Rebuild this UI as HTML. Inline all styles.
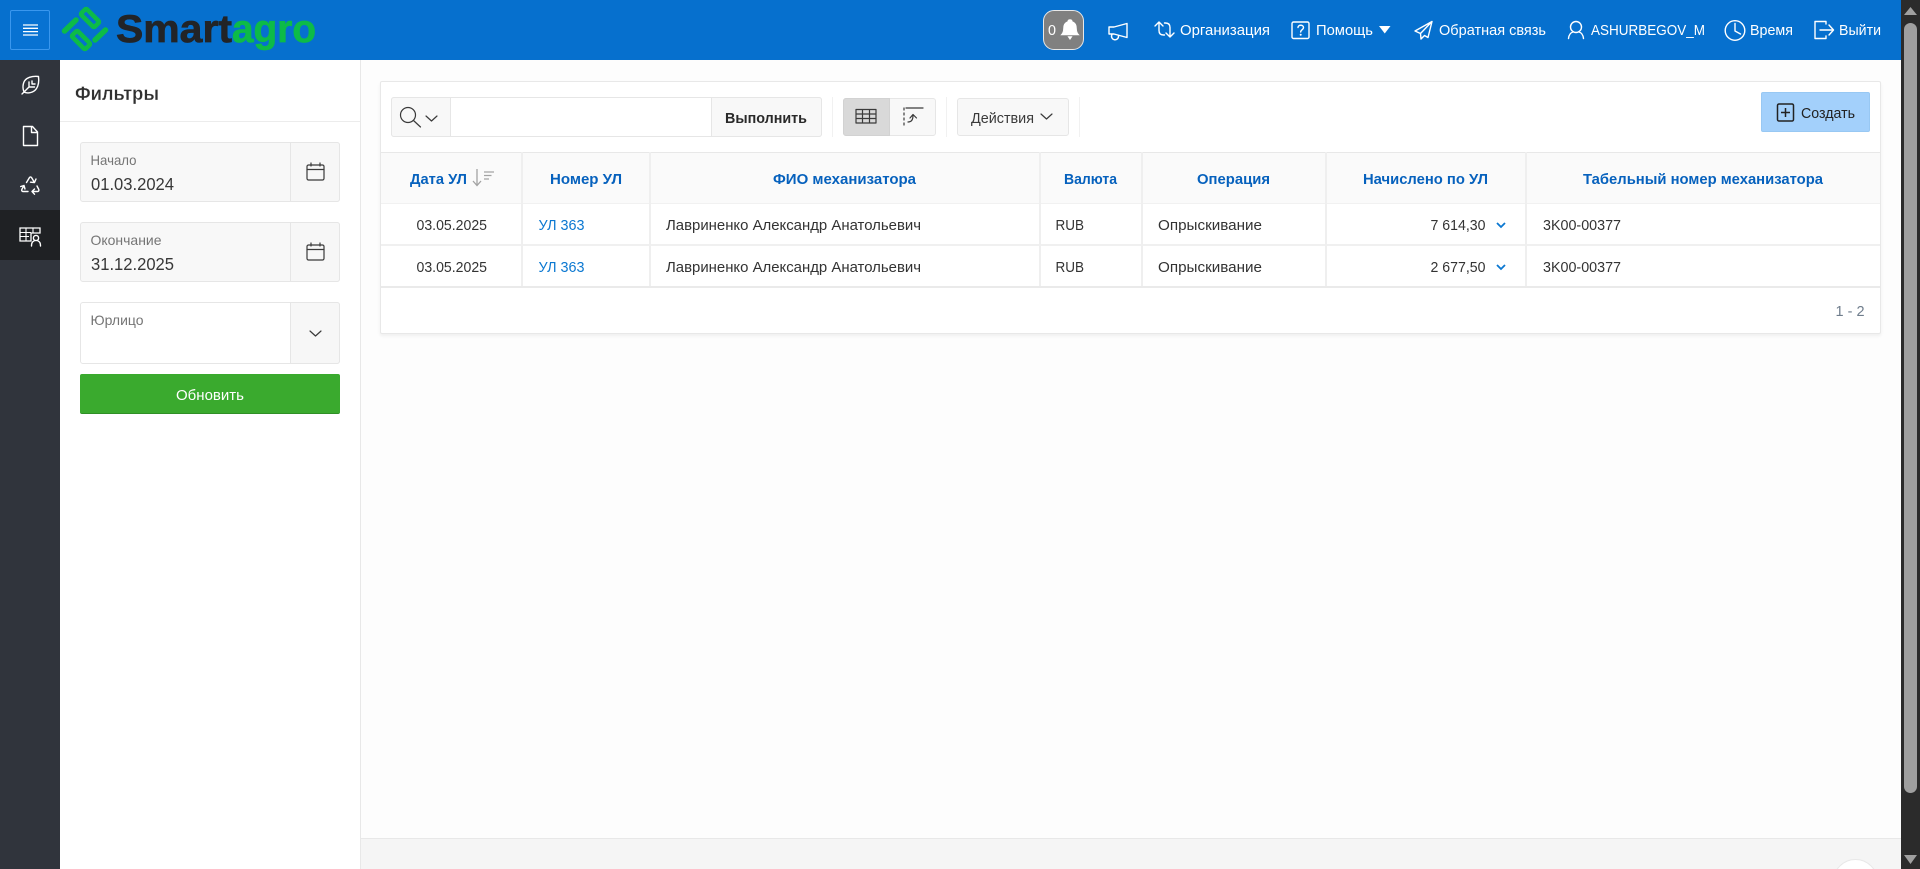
<!DOCTYPE html>
<html lang="ru">
<head>
<meta charset="utf-8">
<title>Smartagro</title>
<style>
html,body{margin:0;padding:0;width:1920px;height:869px;overflow:hidden;background:#fdfdfd;font-family:"Liberation Sans",sans-serif}
#p{position:relative;width:1920px;height:869px;overflow:hidden;background:#fdfdfd}
.a{position:absolute;box-sizing:border-box}
svg{position:absolute;left:0;top:0}
text{font-family:"Liberation Sans",sans-serif;font-size:14.5px;fill:#333}
.w text,text.w{fill:#fff}
.th text{fill:#0661bd;font-weight:bold;font-size:14.5px}
.l{fill:#0b78d1}
.lab{fill:#757575;font-size:14px}
.val{fill:#383838;font-size:17.5px}
.ic{fill:none;stroke:#fff;stroke-width:1.4;stroke-linecap:round;stroke-linejoin:round}
.dk{fill:none;stroke:#3a3a3a;stroke-width:1.2;stroke-linecap:round;stroke-linejoin:round}
</style>
</head>
<body>
<div id="p">
<!-- header -->
<div class="a" style="left:0;top:0;width:1901px;height:60px;background:#0670ce"></div>
<div class="a" style="left:10px;top:10px;width:40px;height:40px;border:1px solid #3a97ee;border-radius:2px;background:#0872d2"></div>
<div class="a" style="left:1043px;top:10px;width:41px;height:40px;background:#808080;border:1px solid #e8e8e8;border-radius:11px"></div>
<!-- sidebar -->
<div class="a" style="left:0;top:60px;width:60px;height:809px;background:#30343c"></div>
<div class="a" style="left:0;top:210px;width:60px;height:50px;background:#1f2124"></div>
<!-- filter panel -->
<div class="a" style="left:60px;top:60px;width:301px;height:809px;background:#fff;border-right:1px solid #e8e8e8"></div>
<div class="a" style="left:60px;top:121px;width:300px;height:1px;background:#ececec"></div>
<div class="a" style="left:80px;top:142px;width:260px;height:60px;background:#f8f8f8;border:1px solid #e6e6e6;border-radius:3px"></div>
<div class="a" style="left:290px;top:142px;width:50px;height:60px;background:#f7f7f7;border:1px solid #e6e6e6;border-radius:0 3px 3px 0"></div>
<div class="a" style="left:80px;top:222px;width:260px;height:60px;background:#f8f8f8;border:1px solid #e6e6e6;border-radius:3px"></div>
<div class="a" style="left:290px;top:222px;width:50px;height:60px;background:#f7f7f7;border:1px solid #e6e6e6;border-radius:0 3px 3px 0"></div>
<div class="a" style="left:80px;top:302px;width:260px;height:62px;background:#fff;border:1px solid #e6e6e6;border-radius:3px"></div>
<div class="a" style="left:290px;top:302px;width:50px;height:62px;background:#f7f7f7;border:1px solid #e6e6e6;border-radius:0 3px 3px 0"></div>
<div class="a" style="left:80px;top:374px;width:260px;height:40px;background:#3aaa2e;border-radius:2px;border-bottom:1px solid #2f8f26"></div>
<!-- footer -->
<div class="a" style="left:361px;top:838px;width:1540px;height:31px;background:#f5f5f5;border-top:1px solid #e8e8e8"></div>
<div class="a" style="left:1833px;top:859px;width:45px;height:45px;background:#fff;border:1px solid #e8e8e8;border-radius:50%"></div>
<!-- report card -->
<div class="a" style="left:380px;top:81px;width:1501px;height:253px;background:#fff;border:1px solid #e8e8e8;border-radius:2px;box-shadow:0 2px 3px rgba(0,0,0,.06)"></div>
<!-- toolbar -->
<div class="a" style="left:391px;top:97px;width:431px;height:40px;background:#fff;border:1px solid #e6e6e6;border-radius:3px"></div>
<div class="a" style="left:391px;top:97px;width:60px;height:40px;background:#f8f8f8;border:1px solid #e6e6e6;border-radius:3px 0 0 3px"></div>
<div class="a" style="left:711px;top:97px;width:111px;height:40px;background:#f8f8f8;border:1px solid #e6e6e6;border-radius:0 3px 3px 0"></div>
<div class="a" style="left:832px;top:97px;width:1px;height:40px;background:#f1f1f1"></div>
<div class="a" style="left:843px;top:98px;width:93px;height:38px;background:#f8f8f8;border:1px solid #e6e6e6;border-radius:3px"></div>
<div class="a" style="left:843px;top:98px;width:47px;height:38px;background:#d9d9d9;border:1px solid #d2d2d2;border-radius:3px 0 0 3px"></div>
<div class="a" style="left:946px;top:97px;width:1px;height:40px;background:#f1f1f1"></div>
<div class="a" style="left:957px;top:98px;width:112px;height:38px;background:#f8f8f8;border:1px solid #e6e6e6;border-radius:3px"></div>
<div class="a" style="left:1079px;top:97px;width:1px;height:40px;background:#f1f1f1"></div>
<div class="a" style="left:1761px;top:92px;width:109px;height:40px;background:#a3d0fb;border:1px solid #98c8f3;border-radius:2px"></div>
<!-- table -->
<div class="a" style="left:381px;top:152px;width:1499px;height:52px;background:#fafafa;border-top:1px solid #e8e8e8;border-bottom:1px solid #f1f1f1"></div>
<div class="a" style="left:381px;top:244px;width:1499px;height:2px;background:#f0f0f0"></div>
<div class="a" style="left:381px;top:286px;width:1499px;height:2px;background:#eaeaea"></div>
<div class="a" style="left:521px;top:152px;width:2px;height:134px;background:#efefef"></div>
<div class="a" style="left:649px;top:152px;width:2px;height:134px;background:#efefef"></div>
<div class="a" style="left:1039px;top:152px;width:2px;height:134px;background:#efefef"></div>
<div class="a" style="left:1141px;top:152px;width:2px;height:134px;background:#efefef"></div>
<div class="a" style="left:1325px;top:152px;width:2px;height:134px;background:#efefef"></div>
<div class="a" style="left:1525px;top:152px;width:2px;height:134px;background:#efefef"></div>
<!-- scrollbar -->
<div class="a" style="left:1901px;top:0;width:19px;height:869px;background:#2b2b2b"></div>
<div class="a" style="left:1904px;top:23px;width:13px;height:770px;background:#9f9f9f;border-radius:7px"></div>

<svg width="1920" height="869" viewBox="0 0 1920 869" xmlns="http://www.w3.org/2000/svg">
<!-- scroll arrows -->
<path d="M1910.500 7l6.500 8h-13z M1904 855h13l-6.500 9z" fill="#a0a0a0"/>
<!-- hamburger -->
<path d="M23 25h15M23 28.300h15M23 31.600h15M23 35h15" stroke="#fff" stroke-width="1.300" fill="none"/>
<!-- logo -->
<g fill="none" stroke="#0dbb48" stroke-width="4.600" stroke-linecap="round" stroke-linejoin="round">
<rect x="80.500" y="14" width="19" height="8" rx="1.500" transform="rotate(45 90 18)"/>
<rect x="71.500" y="36" width="19" height="8" rx="1.500" transform="rotate(45 81 40)"/>
<path stroke-width="5.500" d="M64.500 31L76 20M95 40L105.500 30"/>
</g>
<text x="116" y="42" textLength="116" lengthAdjust="spacingAndGlyphs" style="font-size:39px;font-weight:bold;fill:#222427;stroke:#222427;stroke-width:.7">Smart</text>
<text x="232" y="42" textLength="84" lengthAdjust="spacingAndGlyphs" style="font-size:39px;font-weight:bold;fill:#0dbb48;stroke:#0dbb48;stroke-width:.7">agro</text>

<!-- header items -->
<g class="w">
<text x="1048" y="35" textLength="8" lengthAdjust="spacingAndGlyphs">0</text>
<text x="1180" y="35" textLength="90" lengthAdjust="spacingAndGlyphs">Организация</text>
<text x="1316" y="35" textLength="57" lengthAdjust="spacingAndGlyphs">Помощь</text>
<text x="1439" y="35" textLength="107" lengthAdjust="spacingAndGlyphs">Обратная связь</text>
<text x="1591" y="35" textLength="114" lengthAdjust="spacingAndGlyphs">ASHURBEGOV_M</text>
<text x="1750" y="35" textLength="43" lengthAdjust="spacingAndGlyphs">Время</text>
<text x="1839" y="35" textLength="42" lengthAdjust="spacingAndGlyphs">Выйти</text>
</g>
<!-- bell -->
<path d="M1070 19.500c1.300 0 2.200.9 2.200 2 3.200 1 4.300 3.800 4.300 7 0 3.500 1 5 2.500 6.500h-18c1.500-1.500 2.500-3 2.500-6.500 0-3.200 1.100-6 4.300-7 0-1.100.9-2 2.200-2z M1068 36.500h4l-2 3z" fill="#fff" stroke="#fff" stroke-width=".6"/>
<!-- megaphone -->
<path class="ic" d="M1127 23.500v14l-13-3.500h-5v-7h5zM1112 34.500a3.500 3.500 0 1 0 6.500 1.500"/>
<!-- swap -->
<path class="ic" d="M1155 26l4-4 4 4M1159 22.500v8c0 3 1.500 4.500 4.500 4.500h1M1174 33l-4 4-4-4M1170 36.500v-9c0-3-1.500-4.500-4.500-4.500h-1"/>
<!-- help -->
<rect class="ic" x="1292" y="22" width="17" height="16.500" rx="1.500"/>
<path class="ic" d="M1298 27.500c0-3 5.500-3 5.500 0 0 2.300-2.800 2-2.800 4.500"/>
<circle cx="1300.700" cy="34.700" r="1" fill="#fff"/>
<path d="M1379 26h11.500l-5.750 7.500z" fill="#fff"/>
<!-- send -->
<path class="ic" d="M1432 21.500l-17 9.500 5.500 2.500zM1432 21.500l-11.500 12 .5 5.500 3.500-3.500 3.500 2z"/>
<!-- user -->
<circle class="ic" cx="1576" cy="27" r="5.500"/>
<path class="ic" d="M1568.500 38.500c.5-4 2.500-6 4.500-6.500M1583.500 38.500c-.5-4-2.500-6-4.500-6.500"/>
<!-- clock -->
<circle class="ic" cx="1735" cy="30.500" r="9.800"/>
<path class="ic" d="M1735 23.500v7.500l5.500 3"/>
<!-- exit -->
<path class="ic" d="M1826 24v-2.500h-11v17h11V36M1820 30h13M1829 25l4.500 5-4.500 5"/>

<!-- sidebar icons -->
<path class="ic" d="M22 94l7-7M24 92c-2-5-1-11 3-13.500 3-2 8-2.500 11.500-2 .5 4 0 9-2 12-2.500 4-8.500 5.500-12.500 3.500zM29 87v-5M29 87h5.500M32 84v-3M32 84h3"/>
<path class="ic" d="M23.500 126.500h9l5 5.500v13.500h-14zM31.500 126.500v6h6"/>
<path class="ic" d="M26.500 182.500l3-5c.5-.7 1.500-.7 2 0l3 5M34.500 182.500l1.500-3.500M34.500 182.500l-4-.3M37 186l1.800 3.500c.4.9-.2 2-1.200 2H32M32 191.500l2.500-2.500M32 191.500l2.500 2.700M28 191.500h-5c-1 0-1.600-1.100-1.200-2l2.200-4M24 185.500l-3.300 1M24 185.500l1 3.500"/>
<path d="M20 228h20v5h-9v8H20z" fill="none" stroke="#fff" stroke-width="1.300"/>
<path d="M20 232.500h11M20 236.500h9M26 228v13M33 228v5" stroke="#fff" stroke-width="1.100" fill="none"/>
<circle class="ic" cx="36" cy="238" r="2.600"/>
<path class="ic" d="M31.500 246c0-3 1-4.500 2.500-5M40.500 246c0-3-1-4.500-2.500-5"/>

<!-- filters -->
<text x="75" y="100" textLength="84" lengthAdjust="spacingAndGlyphs" style="font-size:19px;font-weight:bold;fill:#2f2f2f;stroke:#fff;stroke-width:.25">Фильтры</text>
<text class="lab" x="90.500" y="165" textLength="46" lengthAdjust="spacingAndGlyphs">Начало</text>
<text class="val" x="91" y="190" textLength="83" lengthAdjust="spacingAndGlyphs">01.03.2024</text>
<text class="lab" x="90.500" y="245" textLength="71" lengthAdjust="spacingAndGlyphs">Окончание</text>
<text class="val" x="91" y="270" textLength="83" lengthAdjust="spacingAndGlyphs">31.12.2025</text>
<text class="lab" x="90.500" y="325" textLength="53" lengthAdjust="spacingAndGlyphs">Юрлицо</text>
<text class="w" x="176" y="400" textLength="68" lengthAdjust="spacingAndGlyphs" style="font-size:15px">Обновить</text>
<g class="dk">
<rect x="307" y="165" width="17" height="15" rx="1.500"/><path d="M307 169.500h17M311 163v3M320 163v3"/>
<rect x="307" y="245" width="17" height="15" rx="1.500"/><path d="M307 249.500h17M311 243v3M320 243v3"/>
<path d="M310 331l5.500 5 5.500-5"/>
</g>

<!-- toolbar content -->
<g class="dk">
<circle cx="408" cy="115" r="7.500"/><path d="M413.500 120.500l7 6.500M426 116l5.500 5 5.500-5"/>
<path d="M856 109.500h20v13.500h-20zM856 114h20M856 118.500h20M862.500 109.500v13.500M869.500 109.500v13.500" stroke-width="1.200"/>
<path d="M906 108h17M904 108v2M904 113v2M904 118v2M904 123v2M908 122c3 0 5-2 5-6.500M910 118l3-3.500 3.500 3.500" stroke-width="1.200"/>
<path d="M1041 114l5.500 5 5.500-5"/>
</g>
<text x="725" y="123" textLength="82" lengthAdjust="spacingAndGlyphs" style="font-weight:bold;fill:#2a2a2a;font-size:14.500px">Выполнить</text>
<text x="971" y="123" textLength="63" lengthAdjust="spacingAndGlyphs" style="fill:#3a3a3a">Действия</text>
<rect class="dk" x="1777.500" y="104" width="16" height="17" rx="1.500" style="stroke-width:1.500;stroke:#222"/>
<path d="M1781 112.500h9M1785.500 108v9" stroke="#222" stroke-width="1.500"/>
<text x="1801" y="118" textLength="54" lengthAdjust="spacingAndGlyphs" style="fill:#222">Создать</text>

<!-- table headers -->
<g class="th">
<text x="410" y="184" textLength="57" lengthAdjust="spacingAndGlyphs">Дата УЛ</text>
<text x="550" y="184" textLength="72" lengthAdjust="spacingAndGlyphs">Номер УЛ</text>
<text x="773" y="184" textLength="143" lengthAdjust="spacingAndGlyphs">ФИО механизатора</text>
<text x="1064" y="184" textLength="53" lengthAdjust="spacingAndGlyphs">Валюта</text>
<text x="1197" y="184" textLength="73" lengthAdjust="spacingAndGlyphs">Операция</text>
<text x="1363" y="184" textLength="125" lengthAdjust="spacingAndGlyphs">Начислено по УЛ</text>
<text x="1583" y="184" textLength="240" lengthAdjust="spacingAndGlyphs">Табельный номер механизатора</text>
</g>
<path d="M477 169v16M473 181l4 4.500 4-4.500M484 172h10M484 175.500h7.500M484 179h5" fill="none" stroke="#a3a3a3" stroke-width="1.300"/>

<!-- rows -->
<text x="416.500" y="230" textLength="70.500" lengthAdjust="spacingAndGlyphs">03.05.2025</text>
<text class="l" x="538.500" y="230" textLength="46" lengthAdjust="spacingAndGlyphs">УЛ 363</text>
<text x="666" y="230" textLength="255" lengthAdjust="spacingAndGlyphs">Лавриненко Александр Анатольевич</text>
<text x="1055.500" y="230" textLength="28.500" lengthAdjust="spacingAndGlyphs">RUB</text>
<text x="1158" y="230" textLength="104" lengthAdjust="spacingAndGlyphs">Опрыскивание</text>
<text x="1430.500" y="230" textLength="55" lengthAdjust="spacingAndGlyphs">7 614,30</text>
<text x="1543" y="230" textLength="78" lengthAdjust="spacingAndGlyphs">3K00-00377</text>

<text x="416.500" y="272" textLength="70.500" lengthAdjust="spacingAndGlyphs">03.05.2025</text>
<text class="l" x="538.500" y="272" textLength="46" lengthAdjust="spacingAndGlyphs">УЛ 363</text>
<text x="666" y="272" textLength="255" lengthAdjust="spacingAndGlyphs">Лавриненко Александр Анатольевич</text>
<text x="1055.500" y="272" textLength="28.500" lengthAdjust="spacingAndGlyphs">RUB</text>
<text x="1158" y="272" textLength="104" lengthAdjust="spacingAndGlyphs">Опрыскивание</text>
<text x="1430.500" y="272" textLength="55" lengthAdjust="spacingAndGlyphs">2 677,50</text>
<text x="1543" y="272" textLength="78" lengthAdjust="spacingAndGlyphs">3K00-00377</text>

<path d="M1497 223l4 4 4-4M1497 265l4 4 4-4" fill="none" stroke="#0b78d1" stroke-width="1.800"/>
<text x="1835.500" y="316" textLength="29" lengthAdjust="spacingAndGlyphs" style="fill:#6f7d8c">1 - 2</text>
</svg>
</div>
</body>
</html>
